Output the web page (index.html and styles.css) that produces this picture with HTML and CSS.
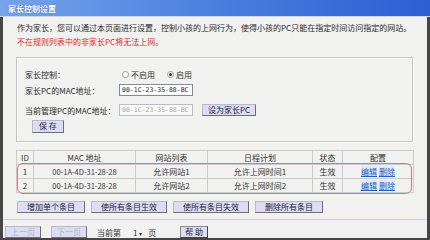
FILE: index.html
```html
<!DOCTYPE html>
<html lang="zh-CN">
  <head>
    <meta charset="UTF-8" />
    <title>家长控制设置</title>
    <link rel="stylesheet" href="styles.css">
  </head>
  <body>
    <div class="titlebar">家长控制设置</div>

    <div class="frame">
      <div class="intro">
        <p>作为家长，您可以通过本页面进行设置，控制小孩的上网行为，使得小孩的PC只能在指定时间访问指定的网站。</p>
        <p class="warn">不在规则列表中的非家长PC将无法上网。</p>
      </div>

      <div class="panel">
        <div class="row row-switch">
          <span class="label">家长控制：</span>
          <span class="radio"><span class="dot"></span>不启用</span>
          <span class="radio"><span class="dot on"></span>启用</span>
        </div>
        <div class="row row-mac">
          <span class="label">家长PC的MAC地址：</span>
          <span class="field">00-1C-23-35-88-BC</span>
        </div>
        <div class="row row-cur">
          <span class="label">当前管理PC的MAC地址：</span>
          <span class="field disabled">00-1C-23-35-88-BC</span>
          <button class="btn btn-set">设为家长PC</button>
        </div>
        <div class="row row-save">
          <button class="btn btn-save">保 存</button>
        </div>
      </div>

      <div class="rules">
        <table>
          <colgroup>
            <col style="width: 17px">
            <col style="width: 102px">
            <col style="width: 72px">
            <col style="width: 105px">
            <col style="width: 30px">
            <col style="width: 71px">
          </colgroup>
          <thead>
            <tr>
              <th>ID</th>
              <th>MAC 地址</th>
              <th>网站列表</th>
              <th>日程计划</th>
              <th>状态</th>
              <th>配置</th>
            </tr>
          </thead>
          <tbody>
            <tr>
              <td>1</td>
              <td class="mono">00-1A-4D-31-28-28</td>
              <td>允许网站1</td>
              <td>允许上网时间1</td>
              <td>生效</td>
              <td><a href="#">编辑</a> <a href="#">删除</a></td>
            </tr>
            <tr>
              <td>2</td>
              <td class="mono">00-1A-4D-31-28-28</td>
              <td>允许网站2</td>
              <td>允许上网时间2</td>
              <td>生效</td>
              <td><a href="#">编辑</a> <a href="#">删除</a></td>
            </tr>
          </tbody>
        </table>
        <div class="mark"></div>
      </div>

      <div class="actions">
        <button class="btn">增加单个条目</button>
        <button class="btn">使所有条目生效</button>
        <button class="btn">使所有条目失效</button>
        <button class="btn">删除所有条目</button>
      </div>

      <div class="pager">
        <button class="btn off">上一页</button>
        <button class="btn off">下一页</button>
        <span class="page-text">当前第</span>
        <span class="page-sel">1 <span class="arrow">▾</span></span>
        <span class="page-text">页</span>
        <button class="btn btn-help">帮 助</button>
      </div>
    </div>
  </body>
</html>
```

FILE: styles.css
```css
html,
body {
  margin: 0;
  padding: 0;
}

body {
  width: 430px;
  height: 240px;
  overflow: hidden;
  background: #464646;
  font-family: "Noto Sans CJK SC", "Noto Sans", sans-serif;
  font-size: 8px;
  color: #2a2a2a;
}

.titlebar {
  height: 17px;
  line-height: 17px;
  padding-left: 8px;
  color: #fff;
  font-weight: bold;
  text-shadow: 0 0 1px #2a4fa8;
  background: linear-gradient(to right, #76a4ea, #4f82e0 45%, #2d5ed2);
  border-bottom: 1px solid #c9d6ee;
  box-sizing: border-box;
}

.frame {
  margin: 0 3px 0 3px;
  height: 221px;
  background: #f1f1ef;
  display: flex;
  flex-direction: column;
}

.intro {
  padding: 4px 0 0 14px;
}

.intro p {
  margin: 0;
  line-height: 14px;
  white-space: nowrap;
}

.warn {
  color: #e0262a;
}

.panel {
  margin: 8px 14px 0 13px;
  height: 85px;
  box-sizing: border-box;
  border: 1px solid #c4c4c4;
  box-shadow: 1px 1px 0 #fff, inset 1px 1px 0 #fff;
  padding: 9px 8px 0 8px;
  display: flex;
  flex-direction: column;
}

.row {
  display: flex;
  align-items: center;
  height: 14px;
}

.row-mac {
  margin-top: 2px;
}

.row-cur {
  margin-top: 6px;
}

.row-save {
  margin-top: 3px;
  height: 12px;
  padding-left: 7px;
}

.label {
  width: 94px;
  flex: none;
  white-space: nowrap;
}

.row-switch .label {
  width: 97px;
}

.radio {
  display: flex;
  align-items: center;
  gap: 2px;
  margin-right: 12px;
  color: #333;
}

.dot {
  width: 5px;
  height: 5px;
  border-radius: 50%;
  border: 1px solid #9a9a9a;
  background: #fff;
  position: relative;
}

.dot.on::after {
  content: "";
  position: absolute;
  left: 1px;
  top: 1px;
  width: 3px;
  height: 3px;
  border-radius: 50%;
  background: #333;
}

.field {
  width: 74px;
  height: 12px;
  line-height: 11px;
  box-sizing: border-box;
  border: 1px solid #7f8a9c;
  background: #fff;
  padding-left: 2px;
  font-family: "DejaVu Sans Mono", monospace;
  font-size: 6.5px;
  color: #222;
  white-space: nowrap;
  overflow: hidden;
}

.field.disabled {
  color: #a8a8a8;
  border-color: #b8bec8;
  background: #f8f8f8;
}

.btn {
  height: 12px;
  padding: 0 9px;
  margin: 0;
  font-family: inherit;
  font-size: 8px;
  line-height: 10px;
  color: #1e2240;
  background: #dcdcf2;
  border: 1px solid;
  border-color: #b8b8c8 #6c6c80 #6c6c80 #b8b8c8;
  box-sizing: border-box;
  white-space: nowrap;
}

.btn-set {
  margin-left: 9px;
  padding: 0 5px;
}

.btn-save {
  padding: 0 6px;
  height: 13px;
}

.rules {
  position: relative;
  margin: 8px 14px 0 13px;
}

table {
  width: 397px;
  border-collapse: collapse;
  table-layout: fixed;
}

th,
td {
  border: 1px solid #cbcbcb;
  height: 13px;
  padding: 0;
  text-align: center;
  font-weight: normal;
  white-space: nowrap;
  color: #333;
}

tbody td {
  height: 13px;
}

.mono {
  font-size: 7.5px;
}

td a {
  color: #1f5fc4;
  text-decoration: underline;
  background: #dfe9f6;
}

.mark {
  position: absolute;
  left: 1px;
  top: 13px;
  width: 395px;
  height: 31px;
  box-sizing: border-box;
  border: 1.5px solid #d9787c;
  border-radius: 6px;
}

.actions {
  display: flex;
  gap: 6px;
  margin: 8px 0 0 14px;
}

.actions .btn {
  padding: 0 9px;
}

.pager {
  margin-top: 6px;
  border-top: 1px solid #dccfae;
  padding: 6px 0 0 2px;
  display: flex;
  align-items: center;
  height: 12px;
  box-sizing: content-box;
}

.btn.off {
  color: #b4b4c8;
  padding: 0 5px;
  margin-right: 10px;
}

.page-text {
  color: #333;
}

.page-sel {
  margin: 0 6px 0 12px;
  color: #333;
}

.arrow {
  font-size: 6px;
}

.btn-help {
  margin-left: 24px;
  padding: 0 4px;
  border-color: #8a8a9a #444 #444 #8a8a9a;
}
```
